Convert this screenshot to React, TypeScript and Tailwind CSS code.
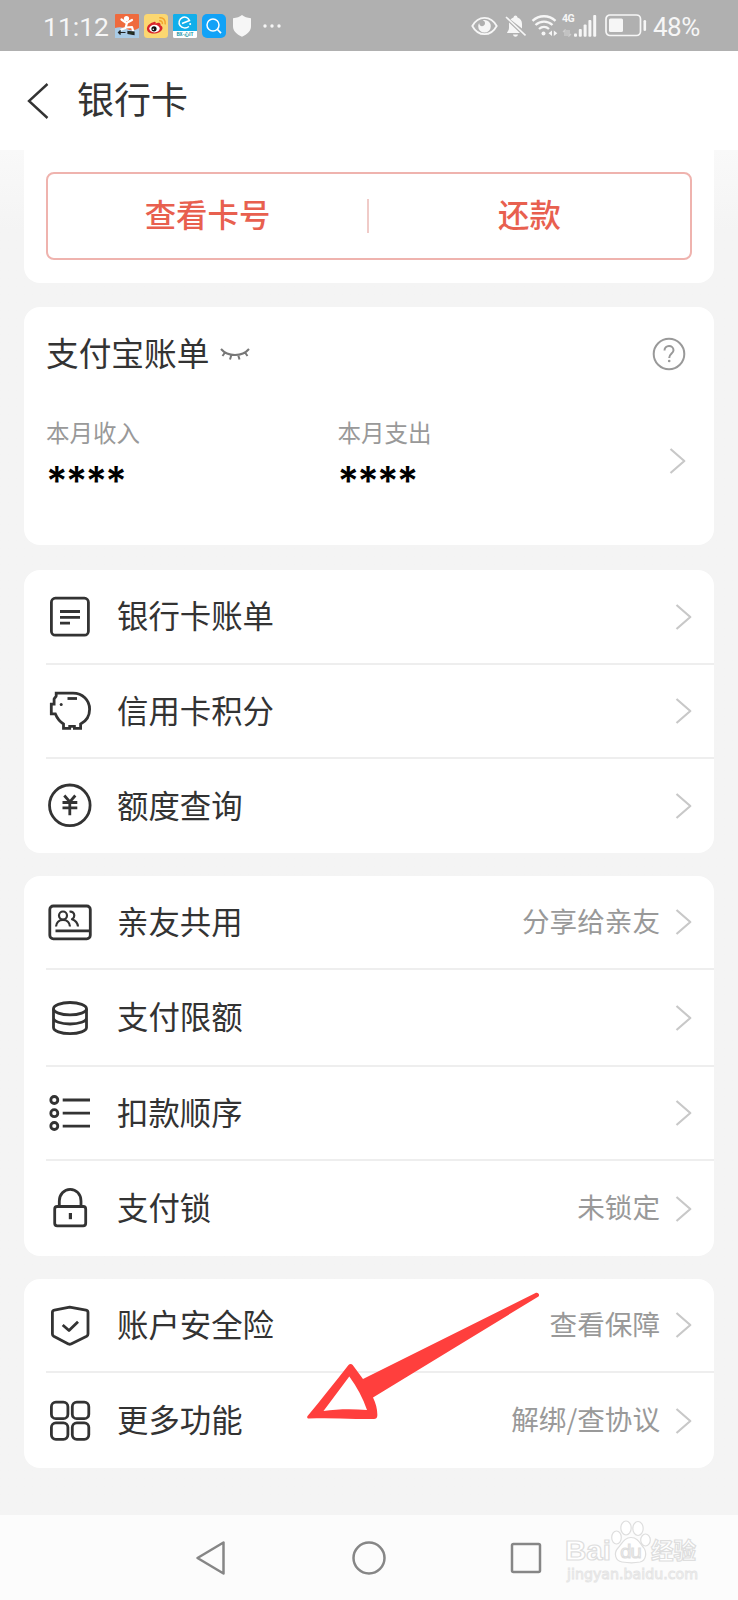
import type { ReactNode } from 'react';

type Row = {
  label: string;
  icon: ReactNode;
  value?: string;
  height: string;
};

function LineIcon({ children }: { children: ReactNode }) {
  return (
    <svg
      viewBox="0 0 46 46"
      className="ml-px h-[46px] w-[46px] shrink-0"
      fill="none"
      stroke="#333333"
      strokeWidth="2.8"
      strokeLinejoin="round"
    >
      {children}
    </svg>
  );
}

const BillIcon = () => (
  <LineIcon>
    <rect x="4.4" y="4.2" width="37" height="37" rx="4" />
    <path d="M13 17.5h20M13 23.3h20M13 29.2h10" />
  </LineIcon>
);

const PiggyIcon = () => (
  <LineIcon>
    <path
      strokeLinejoin="miter"
      d="M9.2 5.2H26c9.500 0 16.600 7 16.600 16 0 6.800-3.600 12-9 14.800v4.300h-6.200v-2h-4.700v2h-6.200V36c-3.800-2.400-6.500-6-8.200-10.200H4.300v-9.600h2.800V11c.5-1.400 2.100-2.200 2.100-3z"
    />
    <path d="M20.500 10.500h9.500" />
    <circle cx="14.200" cy="16.500" r="1.500" fill="#333333" stroke="none" />
  </LineIcon>
);

const YenIcon = () => (
  <LineIcon>
    <circle cx="22.800" cy="22.300" r="20.300" />
    <path d="M17.300 12.500l5.500 6.300 5.500-6.300M15.500 19.500h14.800M15.500 24.900h14.800M22.800 18.800v13.500" />
  </LineIcon>
);

const FamilyIcon = () => (
  <LineIcon>
    <rect x="2.800" y="7" width="40.500" height="32.800" rx="3.500" />
    <path d="M8.500 31.800h34.500" />
    <g strokeWidth="2.200">
      <circle cx="16" cy="16.500" r="4" />
      <path d="M9 27.500c.3-3.800 3-6.600 7-6.600s6.700 2.800 7 6.600" />
      <path d="M22.500 12.700c2.600-.6 4.800 1.200 4.800 3.700 0 1.800-.9 3-2.300 3.800 3 1 5.600 3.600 6 7.300" />
    </g>
  </LineIcon>
);

const LimitIcon = () => (
  <LineIcon>
    <ellipse cx="23" cy="13.700" rx="16.500" ry="6.200" />
    <path d="M6.500 13.700v18.800c0 3.400 7.400 6.200 16.500 6.200s16.500-2.800 16.500-6.200V13.700M6.500 23c0 3.400 7.400 6 16.500 6s16.500-2.600 16.500-6" />
  </LineIcon>
);

const OrderIcon = () => (
  <LineIcon>
    <path d="M15.700 10h27.300M15.700 23.200h27.300M15.700 36.200h27.300" />
    <circle cx="7.300" cy="10" r="3.500" />
    <circle cx="7.300" cy="23.200" r="3.500" />
    <circle cx="7.300" cy="36" r="3.500" />
  </LineIcon>
);

const LockIcon = () => (
  <LineIcon>
    <rect x="7.700" y="20.500" width="31" height="19.300" rx="2.500" />
    <path d="M12.300 20.500V15c0-6.600 4.700-11.700 10.900-11.700S34 8.400 34 15v5.500" />
    <path d="M23.400 27v6.200" strokeWidth="3.200" />
  </LineIcon>
);

const ShieldIcon = () => (
  <LineIcon>
    <path d="M22.700 5.200L39 8.200c1.200.3 2 1.100 2 2.300V32c0 1-.4 1.700-1.300 2.200L24 41.900c-.9.500-1.700.5-2.600 0L6.700 34.200c-.9-.5-1.300-1.200-1.300-2.200V10.500c0-1.200.8-2 2-2.300z" />
    <path d="M15.700 23l6.300 5.500 9-8.800" />
  </LineIcon>
);

const MoreIcon = () => (
  <LineIcon>
    <rect x="4.400" y="4.200" width="16.500" height="16.500" rx="4.500" />
    <rect x="25.300" y="4.200" width="16.500" height="16.500" rx="4.500" />
    <rect x="4.400" y="24.800" width="16.500" height="16.500" rx="4.500" />
    <rect x="25.300" y="24.800" width="16.500" height="16.500" rx="4.500" />
  </LineIcon>
);

const groups: Row[][] = [
  [
    { label: '银行卡账单', icon: <BillIcon />, height: 'h-[95px]' },
    { label: '信用卡积分', icon: <PiggyIcon />, height: 'h-[94px]' },
    { label: '额度查询', icon: <YenIcon />, height: 'h-[94px]' },
  ],
  [
    { label: '亲友共用', icon: <FamilyIcon />, value: '分享给亲友', height: 'h-[94px]' },
    { label: '支付限额', icon: <LimitIcon />, height: 'h-[97px]' },
    { label: '扣款顺序', icon: <OrderIcon />, height: 'h-[94px]' },
    { label: '支付锁', icon: <LockIcon />, value: '未锁定', height: 'h-[95px]' },
  ],
  [
    { label: '账户安全险', icon: <ShieldIcon />, value: '查看保障', height: 'h-[94px]' },
    { label: '更多功能', icon: <MoreIcon />, value: '解绑/查协议', height: 'h-[95px]' },
  ],
];

function Chevron() {
  return (
    <svg viewBox="0 0 18 28" className="h-7 w-[18px] shrink-0" fill="none" stroke="#c8c8c8" strokeWidth="2.2">
      <path d="M2.500 2l13.800 12L2.500 26" strokeLinejoin="round" />
    </svg>
  );
}

function MenuGroup({ rows }: { rows: Row[] }) {
  return (
    <section className="rounded-2xl bg-white pl-[22px]">
      {rows.map((row, i) => (
        <div
          key={row.label}
          className={`flex items-center pr-[22px] ${row.height} ${
            i < rows.length - 1 ? 'border-b-2 border-[#eeeeee]' : ''
          }`}
        >
          {row.icon}
          <span className="ml-[24px] flex-1 pb-[3px] text-[31.400px] leading-none text-[#333333]">{row.label}</span>
          {row.value && (
            <span className="mr-[14px] pb-[3px] text-[27.600px] leading-none text-[#999999]">{row.value}</span>
          )}
          <Chevron />
        </div>
      ))}
    </section>
  );
}

function StatusBar() {
  return (
    <header className="flex h-[51px] items-center bg-[#b0b0b0] pr-[38px] pl-[43px] text-[#f6f6f6]">
      <span className="mt-[3px] w-[72px] font-[Roboto] text-[26.500px] leading-none">11:12</span>
      <div className="flex items-center gap-[5px]">
        <svg viewBox="0 0 24 24" className="h-6 w-6">
          <rect width="24" height="24" rx="1" fill="#ef6a3d" />
          <path d="M0 14q6-2 12 1t12-1v10H0z" fill="#a9cbe6" />
          <path
            d="M6.500 5.500l5 3.500 5.500-3M12 9l-1.500 5-4 1.500M11 13.500l6-.5 1 3.500"
            stroke="#fff"
            strokeWidth="2.200"
            fill="none"
            strokeLinecap="round"
            strokeLinejoin="round"
          />
          <circle cx="11.500" cy="4.500" r="2.600" fill="#fff" />
          <path d="M3.500 18.500h7M5.500 16.500l-2 2 2 2M13 17.500l6 .5v2.500l-6-1z" stroke="#222" strokeWidth="1.200" fill="#243a20" />
        </svg>
        <svg viewBox="0 0 24 24" className="h-6 w-6">
          <rect width="24" height="24" rx="3.500" fill="#fbd771" />
          <path d="M10 8C6 9 2.500 12 3 15.500 3.500 18.500 7 20 11 19.500c4.500-.5 7.500-3 7.500-5.500 0-2-2-2.500-2-2.500s.5-3-2.500-2.700L11.500 9.500S12.500 7.300 10 8z" fill="#d9252b" />
          <ellipse cx="10.500" cy="14.600" rx="5.200" ry="3.800" fill="#fff" />
          <circle cx="10" cy="14.800" r="2.600" fill="#111" />
          <circle cx="9.300" cy="15.200" r=".8" fill="#fff" />
          <path d="M15 6.800c2.300-.3 3.700 1.200 3.400 3.400M15.300 3.800c4-.5 6.500 2.500 5.900 6.500" stroke="#f3a32c" strokeWidth="1.500" fill="none" />
        </svg>
        <svg viewBox="0 0 24 24" className="h-6 w-6">
          <rect width="24" height="24" rx="1.500" fill="#fff" />
          <path d="M1 0h22a1 1 0 0 1 1 1v16H0V1a1 1 0 0 1 1-1z" fill="#12aeea" />
          <path d="M9 9.500l7.500-3C15 3.500 12 2.500 9.500 3.500 6 5 5.200 9 7 11.500c2 2.800 6 3.200 9 1" stroke="#fff" strokeWidth="1.500" fill="none" />
          <circle cx="17.200" cy="10" r="1" fill="#fff" />
          <text x="12" y="22.300" fontSize="4.800" textAnchor="middle" fill="#1493a5" fontWeight="700">BX-心IT</text>
        </svg>
        <svg viewBox="0 0 24 24" className="h-6 w-6">
          <rect width="24" height="24" rx="5" fill="#12a2f7" />
          <circle cx="11" cy="11" r="6" fill="none" stroke="#fff" strokeWidth="1.500" />
          <path d="M15.500 15.500l3.500 3.700" stroke="#fff" strokeWidth="1.700" />
        </svg>
      </div>
      <svg viewBox="0 0 18 22" className="ml-[7px] h-[22px] w-[18px]" fill="currentColor">
        <path d="M9 0c2.500 1.800 5 2.900 9 3.300v8c0 4.700-3.500 8-9 10.500C3.500 19.300 0 16 0 11.300v-8C4 2.900 6.500 1.800 9 0z" />
      </svg>
      <svg viewBox="0 0 18 4" className="ml-3 h-1 w-[18px]" fill="currentColor">
        <circle cx="2" cy="2" r="1.700" />
        <circle cx="9" cy="2" r="1.700" />
        <circle cx="16" cy="2" r="1.700" />
      </svg>

      <div className="ml-auto flex items-center">
        <svg viewBox="0 0 27 20" className="h-5 w-[27px]">
          <path d="M1.300 10C4 5 8.500 1.800 13.500 1.800S23 5 25.700 10C23 15 18.500 18.200 13.500 18.200S4 15 1.300 10z" fill="none" stroke="currentColor" strokeWidth="1.800" />
          <path d="M13.500 4a6.300 6.300 0 1 1-6.300 6.300c0-1.200.4-2.400 1-3.300 0 2 1.200 3.200 2.800 3.200S14 9 14 7.300 13 4.700 11.700 4.300c.6-.2 1.200-.3 1.800-.3z" fill="currentColor" />
        </svg>
        <svg viewBox="0 0 21 22" className="ml-[7px] h-[22px] w-[21px]" fill="currentColor">
          <path d="M5.500 4.500C6.400 3.400 7.500 2.800 8.500 2.500 8.700 1.200 9.400.5 10.500.5s1.800.7 2 2C15.500 3.300 17 6 17 9v4.500zM4 7.500L15 18H2c0-1.500 2-2.500 2-5zM8 19.500h5c-.4 1.500-1.300 2.200-2.500 2.200S8.400 21 8 19.500z" />
          <path d="M1 2l19.500 18.500" stroke="currentColor" strokeWidth="1.700" />
        </svg>
        <svg viewBox="0 0 27 23" className="ml-[5px] h-[23px] w-[27px]" fill="none" stroke="currentColor" strokeWidth="2.300">
          <path d="M1.500 6.800C8 .7 18 .7 24.500 6.800M4.500 11c5-4.600 12-4.600 17 0M8 15c3-2.700 7-2.700 10 0" />
          <circle cx="12.500" cy="19.500" r="2" fill="currentColor" stroke="none" />
          <path d="M21 16.500v5.500l-3.500-2.700zM22.800 16.500v5.500l3.500-2.700z" fill="currentColor" stroke="none" />
        </svg>
        <div className="ml-[4px] flex h-[23px] w-[36px] items-end">
          <div className="flex h-full w-3 flex-col justify-between">
            <span className="font-[Roboto] text-[10.500px] leading-[10px] font-bold tracking-[-0.500px]">4G</span>
            <svg viewBox="0 0 10 8" className="h-2 w-2.5 opacity-40" fill="none" stroke="currentColor" strokeWidth="1.300">
              <path d="M1 3l2-2v6M9 5L7 7V1M5 1v6" />
            </svg>
          </div>
          <svg viewBox="0 0 23 22" className="h-[22px] w-[23px]" fill="currentColor">
            <rect x="0" y="18.500" width="3" height="3.200" rx="1" />
            <rect x="4.800" y="14" width="3" height="7.700" rx="1" />
            <rect x="9.600" y="9.500" width="3" height="12.200" rx="1" />
            <rect x="14.400" y="5" width="3" height="16.700" rx="1" />
            <rect x="19.200" y="0" width="3" height="21.700" rx="1" />
          </svg>
        </div>
        <svg viewBox="0 0 42 23" className="ml-[7px] h-[23px] w-[42px]">
          <rect x="1" y="1" width="34.500" height="20.500" rx="4" fill="none" stroke="currentColor" strokeWidth="1.700" />
          <rect x="4" y="4.500" width="14" height="13.500" rx="1.500" fill="currentColor" />
          <rect x="38.500" y="6" width="2.600" height="11" rx="1.300" fill="currentColor" />
        </svg>
        <span className="mt-[3px] ml-[6px] w-[47px] font-[Roboto] text-[26px] leading-none tracking-[-0.500px]">48%</span>
      </div>
    </header>
  );
}

function Watermark() {
  return (
    <svg viewBox="0 0 140 70" className="absolute top-[3px] right-[34px] h-[70px] w-[140px]">
      <g fill="#ffffff" stroke="#dedede" strokeWidth="1.200">
        <text x="1" y="41.500" fontSize="28.500" fontWeight="700" fontFamily="Liberation Sans" textLength="46" lengthAdjust="spacingAndGlyphs">
          Bai
        </text>
        <ellipse cx="52.500" cy="19.500" rx="4.800" ry="6.500" />
        <ellipse cx="62" cy="10" rx="5.200" ry="7" />
        <ellipse cx="74" cy="10.500" rx="5.200" ry="7" />
        <ellipse cx="81.500" cy="22" rx="4.800" ry="6" />
        <path d="M67 19.500c7 0 9 6 12.500 10 3.500 4.500 3 13-3.500 14.500-4 .8-13 .8-18 0-7-1.200-8.500-9-4-14 4-4 6-10.500 13-10.500z" />
        <text x="67" y="40" fontSize="19" textAnchor="middle" fontFamily="Open Sans" textLength="22">du</text>
        <text x="87" y="40.500" fontSize="22.500" fontWeight="700" fontFamily="Noto Sans CJK SC" textLength="45">经验</text>
      </g>
      <text
        x="3"
        y="61"
        fontSize="14"
        fontFamily="DejaVu Sans"
        fill="#fcfcfc"
        stroke="#e4e4e4"
        strokeWidth=".9"
        textLength="131"
        lengthAdjust="spacingAndGlyphs"
      >
        jingyan.baidu.com
      </text>
    </svg>
  );
}

function NavBar() {
  return (
    <nav className="relative flex h-[85px] items-center bg-[#fcfcfc] pl-[195px]">
      <svg viewBox="0 0 32 36" className="h-9 w-8" fill="none" stroke="#868686" strokeWidth="2.500" strokeLinejoin="round">
        <path d="M2.500 18L28.500 2.500v31z" />
      </svg>
      <svg viewBox="0 0 36 36" className="ml-[124px] h-9 w-9" fill="none" stroke="#868686" strokeWidth="2.500">
        <circle cx="18" cy="18" r="15.500" />
      </svg>
      <svg viewBox="0 0 36 36" className="ml-[121px] h-9 w-9" fill="none" stroke="#868686" strokeWidth="2.500">
        <rect x="4" y="4" width="28" height="28" rx="1.500" />
      </svg>
      <Watermark />
    </nav>
  );
}

export default function App() {
  return (
    <div className="relative flex h-[1600px] w-[738px] flex-col overflow-hidden bg-[#f4f4f4] font-['Noto_Sans_CJK_SC',sans-serif]">
      <StatusBar />
      <div className="flex h-[99px] shrink-0 items-center bg-white pl-[26px]">
        <svg viewBox="0 0 24 38" className="h-[38px] w-6" fill="none" stroke="#333333" strokeWidth="2.400">
          <path d="M21.500 2L3 19l18.500 17" />
        </svg>
        <h1 className="ml-[27px] pb-1 text-[37px] leading-none text-[#333333]">银行卡</h1>
      </div>

      <main className="flex flex-1 flex-col bg-linear-to-b from-[#f9f9f9] to-[#f4f4f4] to-[80px] px-6">
        <section className="h-[133px] rounded-b-2xl bg-white px-[22px] pt-[22px]">
          <div className="flex h-[88px] items-center rounded-lg border-2 border-[#efb3ae] text-[31.400px] leading-none font-medium text-[#e8604f]">
            <button className="w-[319px] pr-px pb-1 pl-px">查看卡号</button>
            <div className="h-[34px] w-[2px] bg-[#f0cbc8]" />
            <button className="flex-1 pb-1">还款</button>
          </div>
        </section>

        <section className="mt-6 h-[238px] rounded-2xl bg-white px-[22px] pt-[30px]">
          <div className="flex h-[34px] items-center">
            <h2 className="pb-[3px] text-[32.700px] leading-none text-[#333333]">支付宝账单</h2>
            <svg viewBox="0 0 30 14" className="ml-[11px] h-3.5 w-[30px]" fill="none" stroke="#777777" strokeWidth="2">
              <path d="M1 2c3 3.500 8 6 14 6s11-2.500 14-6M5 5.500L2.500 9M11.500 7.500l-1.500 5M18 7.500l1.500 5M25 5.500L27.500 9" />
            </svg>
            <svg viewBox="0 0 34 34" className="mr-[6px] ml-auto h-[34px] w-[34px]" fill="none" stroke="#999999" strokeWidth="2">
              <circle cx="17" cy="17" r="15.300" />
              <path d="M12.500 13.500c0-2.600 2-4.500 4.500-4.500s4.500 1.800 4.500 4.200c0 3.300-4.300 3.600-4.300 7.800" />
              <circle cx="17.200" cy="24" r="1.300" fill="#999999" stroke="none" />
            </svg>
          </div>
          <div className="mt-[48px] flex">
            {['本月收入', '本月支出'].map((label) => (
              <div key={label} className="w-[291.500px]">
                <p className="text-[23.500px] leading-[26px] text-[#999999]">{label}</p>
                <p className="mt-[18px] font-[Inter] text-[40px] leading-[36px] font-semibold tracking-[-1.800px] text-black">
                  ****
                </p>
              </div>
            ))}
            <div className="mt-[28px] ml-[39px]">
              <Chevron />
            </div>
          </div>
        </section>

        <div className="mt-[25px] flex flex-col gap-[23px]">
          {groups.map((rows) => (
            <MenuGroup key={rows[0].label} rows={rows} />
          ))}
        </div>
      </main>

      <NavBar />

      {/* pointer to the last row */}
      <svg viewBox="0 0 240 132" className="pointer-events-none absolute top-[1290px] left-[302px] h-[132px] w-[240px]">
        <path
          fillRule="evenodd"
          fill="#ff3f3d"
          d="M234 2.800c2-.8 4.200 2 2.500 3.700L71 107.500c3 6 4.600 12.500 4.300 18.500-.2 2-1.300 3-3.300 3H54c-16-.8-32-.8-47-.6-2 0-2.400-1.400-1-2.800C19 110 33 92 46.500 75c1.200-1.500 3-1.500 4.200 0L61 89l8-4zM47.300 86.500L21.500 121c14-2 29-2 43.500-1-4-12-10-23-17.700-33.500z"
        />
      </svg>
    </div>
  );
}
